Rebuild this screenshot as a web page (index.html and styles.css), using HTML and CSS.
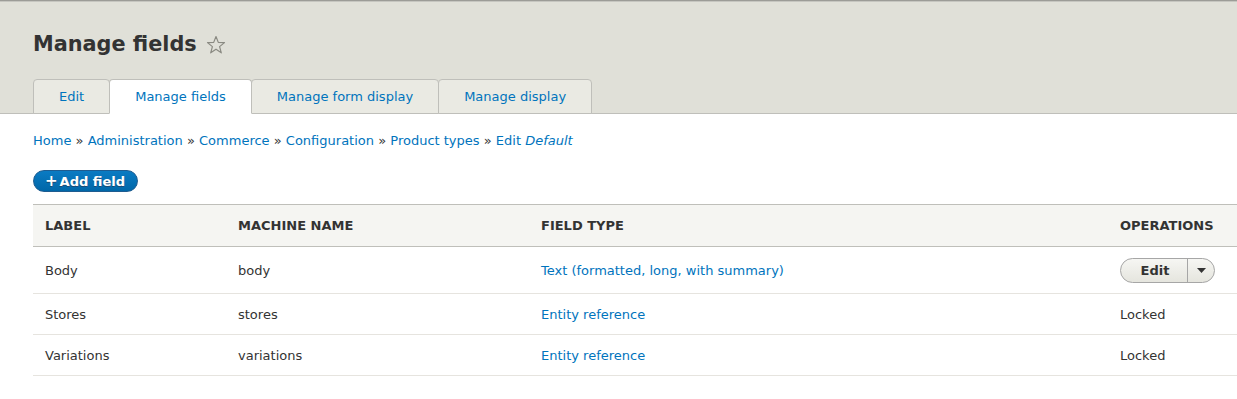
FILE: index.html
```html
<!DOCTYPE html>
<html>
<head>
<meta charset="utf-8">
<title>Manage fields</title>
<link rel="stylesheet" href="styles.css">
</head>
<body>
<header class="page-header">
  <div class="title-row">
    <h1 class="page-title">Manage fields</h1>
    <svg class="star" width="20" height="20" viewBox="0 0 20 20"><polygon points="10,1.5 12.3,7.4 18.5,7.6 13.6,11.6 15.3,17.8 10,14.2 4.7,17.8 6.4,11.6 1.5,7.6 7.7,7.4" fill="none" stroke="#8a8a82" stroke-width="1.2" stroke-linejoin="round"/></svg>
  </div>
  <nav class="tabs">
    <a class="tab" href="#">Edit</a>
    <a class="tab tab--active" href="#">Manage fields</a>
    <a class="tab" href="#">Manage form display</a>
    <a class="tab" href="#">Manage display</a>
  </nav>
</header>
<main class="content">
  <div class="breadcrumb">
    <a href="#">Home</a> <span class="sep">»</span> <a href="#">Administration</a> <span class="sep">»</span> <a href="#">Commerce</a> <span class="sep">»</span> <a href="#">Configuration</a> <span class="sep">»</span> <a href="#">Product types</a> <span class="sep">»</span> <a href="#">Edit <em>Default</em></a>
  </div>
  <div class="actions">
    <a class="button-action" href="#"><span class="plus">+</span>Add field</a>
  </div>
  <table class="fields">
    <thead>
      <tr>
        <th class="col-label">Label</th>
        <th class="col-machine">Machine name</th>
        <th class="col-type">Field type</th>
        <th class="col-ops">Operations</th>
      </tr>
    </thead>
    <tbody>
      <tr class="row-tall">
        <td>Body</td>
        <td>body</td>
        <td><a href="#">Text (formatted, long, with summary)</a></td>
        <td>
          <div class="dropbutton">
            <span class="drop-main">Edit</span>
            <span class="drop-toggle"><svg width="9" height="5" viewBox="0 0 9 5"><polygon points="0,0 9,0 4.5,5" fill="#333"/></svg></span>
          </div>
        </td>
      </tr>
      <tr>
        <td>Stores</td>
        <td>stores</td>
        <td><a href="#">Entity reference</a></td>
        <td>Locked</td>
      </tr>
      <tr>
        <td>Variations</td>
        <td>variations</td>
        <td><a href="#">Entity reference</a></td>
        <td>Locked</td>
      </tr>
    </tbody>
  </table>
</main>
</body>
</html>
```

FILE: styles.css
```css
html, body {
  margin: 0;
  padding: 0;
  background: #fff;
}
body {
  font-family: "DejaVu Sans", Verdana, sans-serif;
  font-size: 13px;
  color: #333;
  overflow: hidden;
}
a {
  color: #0074bd;
  text-decoration: none;
}
.page-header {
  background: #e0e0d8;
  border-bottom: 1px solid #bfbfba;
  box-shadow: inset 0 1px 0 #9c9c97, inset 0 2px 0 #c6c6c0;
  padding: 31px 0 0 33px;
  height: 82px;
  display: flex;
  flex-direction: column;
  justify-content: space-between;
}
.title-row {
  display: flex;
  align-items: center;
  gap: 9px;
}
.page-title {
  margin: 0;
  font-size: 20.8px;
  font-weight: bold;
  line-height: 26px;
  color: #333;
}
.star {
  display: block;
  margin-top: 1px;
}
.tabs {
  display: flex;
  height: 35px;
  margin-bottom: -1px;
}
.tab {
  box-sizing: border-box;
  height: 35px;
  padding: 0 25px;
  display: flex;
  align-items: center;
  background: #eaeae3;
  border: 1px solid #bfbfba;
  border-radius: 4px 4px 0 0;
  margin-right: -1px;
}
.tab--active {
  background: #fff;
  border-bottom-color: #fff;
  position: relative;
}
.content {
  padding: 0 0 0 33px;
}
.breadcrumb {
  padding-top: 19px;
  line-height: 16px;
  color: #333;
}
.actions {
  margin-top: 21px;
  display: flex;
}
.button-action {
  box-sizing: border-box;
  height: 22px;
  display: flex;
  align-items: center;
  padding: 0 12px 0 11px;
  border-radius: 12px;
  background: linear-gradient(#0a7bc3, #0067a8);
  border: 1px solid #1e5c90;
  color: #fff;
  font-weight: bold;
  font-size: 13px;
  text-shadow: 0 1px 0 #1d4a72;
}
.button-action .plus {
  font-size: 15px;
  margin-right: 2px;
  margin-top: -1px;
}
.fields {
  margin-top: 12px;
  width: 1204px;
  border-collapse: collapse;
  table-layout: fixed;
}
.fields th {
  box-sizing: border-box;
  height: 42px;
  background: #f5f5f2;
  border-top: 1px solid #bfbfba;
  border-bottom: 1px solid #bfbfba;
  text-align: left;
  text-transform: uppercase;
  font-size: 13px;
  font-weight: bold;
  color: #333;
  padding: 0 12px;
}
.col-label { width: 193px; }
.col-machine { width: 303px; }
.col-type { width: 579px; }
.col-ops { width: 129px; }
.fields td {
  height: 40px;
  border-bottom: 1px solid #e6e4df;
  padding: 0 12px;
  color: #333;
}
.fields .row-tall td {
  height: 46px;
}
.dropbutton {
  display: inline-flex;
  box-sizing: border-box;
  height: 25px;
  width: 95px;
  border: 1px solid #a6a6a6;
  border-radius: 13px;
  background: linear-gradient(#f6f6f3, #e5e5de);
  vertical-align: middle;
  margin-top: 1px;
}
.drop-main {
  flex: 0 0 67px;
  display: flex;
  align-items: center;
  justify-content: center;
  font-weight: bold;
  color: #333;
  padding-left: 2px;
  box-sizing: border-box;
  border-right: 1px solid #a6a6a6;
}
.drop-toggle {
  flex: 1;
  display: flex;
  align-items: center;
  justify-content: center;
}
```
